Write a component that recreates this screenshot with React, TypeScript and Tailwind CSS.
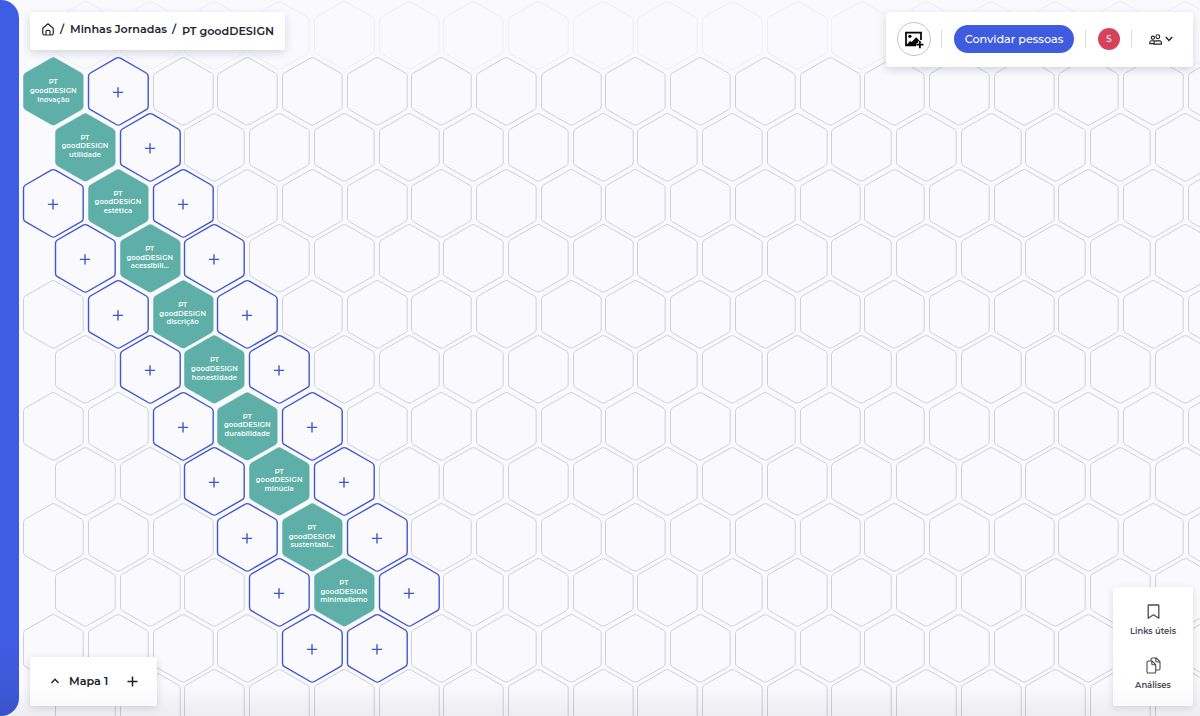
import { clsx } from "clsx";

const HEX_PATH =
  "M28.2 1.2Q30.3 0 32.4 1.2L58.3 16Q60.2 17.1 60.2 19.4V49.3Q60.2 51.6 58.3 52.7L32.4 67.5Q30.3 68.7 28.2 67.5L2.4 52.7Q.5 51.6 .5 49.3V19.4Q.5 17.1 2.4 16Z";

const journeys = [
  "inovação",
  "utilidade",
  "estética",
  "acessibili...",
  "discrição",
  "honestidade",
  "durabilidade",
  "minúcia",
  "sustentabi...",
  "minimalismo",
];

// First row sits behind the top bar, the journeys start on row 0
const rows = Array.from({ length: 13 }, (_, i) => i - 1);

type CellKind = "journey" | "add" | "empty";

function getKind(row: number, col: number): CellKind {
  if (row < 0 || row > 10) return "empty";
  if (row === 10) return col === 4 || col === 5 ? "add" : "empty";
  const current = Math.floor(row / 2);
  if (col === current) return "journey";
  return Math.abs(col - current) === 1 ? "add" : "empty";
}

function HexCell({ kind, label }: { kind: CellKind; label?: string }) {
  return (
    <div className="grid h-[69px] w-[61px] shrink-0 place-items-center">
      <svg
        viewBox="0 0 61 69"
        className={clsx(
          "col-start-1 row-start-1 h-[69px] w-[61px] overflow-visible",
          kind === "journey" && "fill-[#5dafa8] stroke-[#5dafa8]",
          kind === "add" && "fill-[#f9f9fe] stroke-[#3f57cf]",
          kind === "empty" && "fill-[#f9f9fe] stroke-[#cacad2]",
        )}
        strokeWidth={kind === "add" ? 1.4 : kind === "journey" ? 0.5 : 0.9}>
        <path d={HEX_PATH} />
        {kind === "add" && <path d="M24.9 35.4H35.1M30 30.3V40.5" strokeWidth="1.4" />}
      </svg>
      {kind === "journey" && (
        <div className="z-10 col-start-1 row-start-1 flex flex-col items-center pr-px pb-px text-[6.85px] leading-[8.6px] font-semibold tracking-[0.09px] whitespace-nowrap text-white">
          <span>PT</span>
          <span>goodDESIGN</span>
          <span>{label}</span>
        </div>
      )}
    </div>
  );
}

function HexBoard() {
  return (
    <div className="flex flex-col pt-[1.2px]">
      {rows.map((row) => {
        const isOdd = row % 2 !== 0;
        return (
          <div
            key={row}
            className={clsx(
              "flex shrink-0 gap-[3.7px]",
              isOdd ? "h-[56.2px] pl-[36.1px]" : "h-[55.2px] pl-[4.3px]",
              row < 0 && "opacity-25",
            )}>
            {Array.from({ length: isOdd ? 18 : 19 }, (_, col) => (
              <HexCell key={col} kind={getKind(row, col)} label={journeys[row]} />
            ))}
          </div>
        );
      })}
    </div>
  );
}

function Breadcrumb() {
  return (
    <nav className="absolute top-[12px] left-[30px] flex h-[38px] w-[255px] items-center rounded-[3px] bg-white pl-3 text-[11.15px] font-semibold whitespace-nowrap text-[#262632] shadow-[0_3px_8px_rgba(40,40,70,0.16)]">
      <svg viewBox="0 0 12 13" className="mb-[3px] h-[13px] w-[12px] shrink-0" fill="none" stroke="currentColor" strokeWidth="1.2" strokeLinejoin="round">
        <path d="M.8 5.3L6 .8L11.2 5.3V10.6Q11.2 12 9.8 12H2.2Q.8 12 .8 10.6Z" />
        <path d="M4 12V8.3Q4 7.3 5 7.3H7Q8 7.3 8 8.3V12" />
      </svg>
      <span className="mb-[3px] ml-[6px] w-[4px]">/</span>
      <span className="mb-[3px] ml-[6px] w-[97px]">Minhas Jornadas</span>
      <span className="mb-[3px] ml-[5px] w-[4px]">/</span>
      <span className="ml-[6px]">PT goodDESIGN</span>
    </nav>
  );
}

function Divider() {
  return <div className="h-[17px] w-px bg-[#dcdcdf]" />;
}

function TopActions() {
  return (
    <header className="absolute top-[12px] right-[7px] flex h-[55px] w-[307px] items-center rounded-[3px] bg-white pl-[11px] shadow-[0_3px_8px_rgba(40,40,70,0.16)]">
      <button className="mb-px flex size-[34px] items-center justify-center rounded-full border border-[#c5c5c8]">
        <svg viewBox="0 0 20 18" className="mt-px h-[18px] w-[20px]">
          <path d="M17 9V1.7H2V14.3H12" fill="none" stroke="#000" strokeWidth="1.7" />
          <circle cx="5.9" cy="5.3" r="1.6" />
          <path d="M2 14.5L6 10L7.7 11L12.2 6.2L15.6 9.7L11.7 14.5Z" />
          <path d="M15.9 10V17.2M12.5 13.6H19.3" stroke="#fff" strokeWidth="3" />
          <path d="M15.9 10V17.2M12.4 13.6H19.4" stroke="#000" strokeWidth="1.7" />
        </svg>
      </button>
      <div className="mb-[2px] ml-[10px]">
        <Divider />
      </div>
      <button className="mb-[2px] ml-[12px] h-[28px] w-[120px] rounded-full bg-[#3f5be0] text-[11.2px] leading-[26px] font-medium whitespace-nowrap text-white">
        Convidar pessoas
      </button>
      <div className="mb-[2px] ml-[11px]">
        <Divider />
      </div>
      <div className="mb-px ml-[12px] flex size-[22px] items-center justify-center rounded-full bg-[#d6425c] text-[8.5px] font-medium text-white">
        S
      </div>
      <div className="mb-[2px] ml-[11px]">
        <Divider />
      </div>
      <svg viewBox="0 0 13 11" className="mb-px ml-[17px] h-[11px] w-[13px]" fill="none" stroke="#20202c" strokeWidth="1.1">
        <circle cx="3.9" cy="3.7" r="1.6" />
        <circle cx="8.8" cy="2.7" r="1.9" />
        <path d="M5 10.1V8.9Q5 6.9 7 6.9H10.4Q12.4 6.9 12.4 8.9V10.1ZM5.6 6.7H2.8Q.8 6.7 .8 8.5V9.6H4.6" />
      </svg>
      <svg viewBox="0 0 8 6" className="mb-px ml-[3px] h-[6px] w-[8px] overflow-visible" fill="none" stroke="#20202c" strokeWidth="1.4">
        <path d="M.8 1L4 4.4L7.2 1" />
      </svg>
    </header>
  );
}

function MapSelector() {
  return (
    <div className="absolute bottom-[10px] left-[30px] flex h-[49px] w-[127px] items-center rounded-[3px] bg-linear-to-b from-white from-50% to-[#fafafa] pl-[21px] text-[#20202c] shadow-[0_2px_7px_rgba(40,40,70,0.17)]">
      <svg viewBox="0 0 8 6" className="mb-px h-[6px] w-[8px] overflow-visible" fill="none" stroke="currentColor" strokeWidth="1.4">
        <path d="M.5 4.9L4 1.3L7.5 4.9" />
      </svg>
      <span className="mb-px ml-[10px] w-[39px] text-[11.2px] font-semibold whitespace-nowrap">Mapa 1</span>
      <svg viewBox="0 0 11 11" className="ml-[19px] size-[11px]" fill="none" stroke="currentColor" strokeWidth="1.5">
        <path d="M.5 5.5H10.5M5.5 .5V10.5" />
      </svg>
    </div>
  );
}

function ToolsPanel() {
  return (
    <aside className="absolute right-[7px] bottom-[10px] flex h-[119px] w-[80px] flex-col items-center rounded-[3px] bg-linear-to-b from-white from-80% to-[#fafafa] pt-[17px] text-[8.4px] leading-[12px] font-semibold text-[#4a4a53] shadow-[0_2px_7px_rgba(40,40,70,0.15)]">
      <svg viewBox="0 0 13 16" className="h-[16px] w-[13px]" fill="none" stroke="currentColor" strokeWidth="1.3" strokeLinejoin="round">
        <path d="M1.2 1.5Q1.2 1 1.7 1H11.3Q11.8 1 11.8 1.5V14.2L6.5 10.7L1.2 14.2Z" />
      </svg>
      <span className="mt-[5px]">Links úteis</span>
      <svg viewBox="0 0 15 17" className="mt-[20px] h-[17px] w-[15px]" fill="none" stroke="currentColor" strokeWidth="1.1" strokeLinejoin="round">
        <path d="M1 5.3Q1 4 2.3 4H6L9.7 7.7V14.7Q9.7 16 8.4 16H2.3Q1 16 1 14.7ZM5.8 4V6.7Q5.8 7.8 6.9 7.8H9.7" />
        <path d="M5 4V2.3Q5 1 6.3 1H10.2L14 4.7V11.8Q14 13 12.7 13H9.8M9.8 1V3.8Q9.8 5 11 5H14" />
      </svg>
      <span className="mt-[5px]">Análises</span>
    </aside>
  );
}

export default function App() {
  return (
    <div className="relative flex h-[716px] w-[1200px] overflow-hidden bg-[#f9f9fe] font-[Montserrat,Inter,sans-serif]">
      <div className="h-full w-[19px] shrink-0 rounded-r-[18px] bg-linear-to-b from-[#3f5de2] from-90% to-[#3c56d3]" />
      <main className="h-full min-w-0 flex-1 overflow-hidden">
        <HexBoard />
      </main>
      <div className="pointer-events-none absolute inset-x-0 bottom-0 h-[32px] bg-linear-to-b from-transparent to-black/5" />
      <Breadcrumb />
      <TopActions />
      <MapSelector />
      <ToolsPanel />
    </div>
  );
}
